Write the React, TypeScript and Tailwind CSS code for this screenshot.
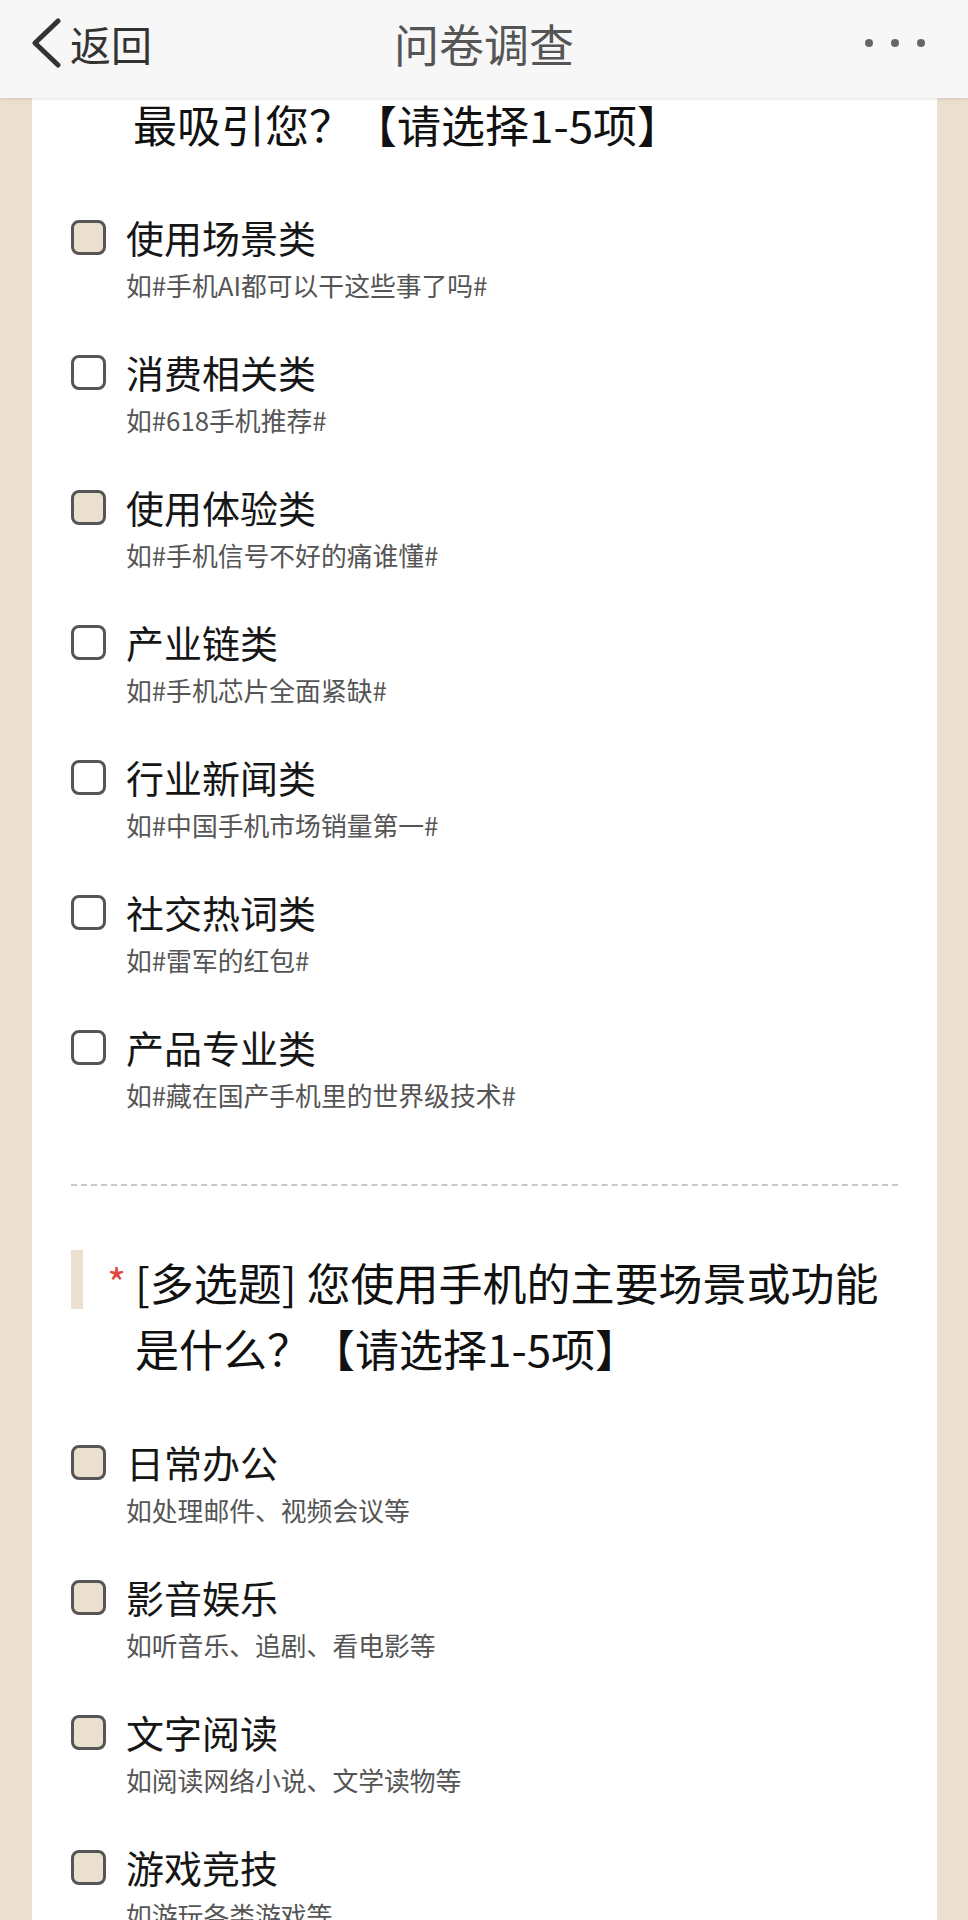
import React from 'react';

// options for the first question (its title is scrolled off the top)
const firstOptions = [
  { id: 'a1', label: '使用场景类', desc: '如#手机AI都可以干这些事了吗#', shaded: true },
  { id: 'a2', label: '消费相关类', desc: '如#618手机推荐#', shaded: false },
  { id: 'a3', label: '使用体验类', desc: '如#手机信号不好的痛谁懂#', shaded: true },
  { id: 'a4', label: '产业链类', desc: '如#手机芯片全面紧缺#', shaded: false },
  { id: 'a5', label: '行业新闻类', desc: '如#中国手机市场销量第一#', shaded: false },
  { id: 'a6', label: '社交热词类', desc: '如#雷军的红包#', shaded: false },
  { id: 'a7', label: '产品专业类', desc: '如#藏在国产手机里的世界级技术#', shaded: false },
];

const secondOptions = [
  { id: 'b1', label: '日常办公', desc: '如处理邮件、视频会议等', shaded: true },
  { id: 'b2', label: '影音娱乐', desc: '如听音乐、追剧、看电影等', shaded: true },
  { id: 'b3', label: '文字阅读', desc: '如阅读网络小说、文学读物等', shaded: true },
  { id: 'b4', label: '游戏竞技', desc: '如游玩各类游戏等', shaded: true },
];

type Option = { id: string; label: string; desc: string; shaded: boolean };

const OptionRow: React.FC<{ option: Option }> = ({ option }) => (
  <li className="flex flex-col mb-[39px]">
    <div className="flex items-center h-[48px]">
      <span
        className={`w-[35px] h-[35px] rounded-[8px] border-[3px] border-[#555555] ml-[39px] ${
          option.shaded ? 'bg-[#ebdfcf]' : 'bg-white'
        }`}
      />
      <span className="ml-[20px] text-[38px] leading-[48px] text-[#161616]">{option.label}</span>
    </div>
    <p className="pl-[94px] text-[25.8px] leading-[48px] text-[#555555]">{option.desc}</p>
  </li>
);

const App: React.FC = () => {
  return (
    <div
      className="w-[968px] h-[1920px] overflow-hidden bg-[#ebdfcf]"
      style={{ fontFamily: '"Noto Sans CJK SC", "Noto Sans", sans-serif' }}
    >
      {/* top bar */}
      <header className="relative z-10 h-[98px] bg-[#f7f7f7] shadow-[0_1px_3px_rgba(0,0,0,0.12)] grid grid-cols-[1fr_auto_1fr] items-center pb-[12px]">
        <div className="flex items-center pl-[30px]">
          <svg width="32" height="50" viewBox="0 0 32 50" fill="none">
            <path d="M28 3 L5 25 L28 47" stroke="#333333" strokeWidth="5" strokeLinecap="round" strokeLinejoin="round" />
          </svg>
          <span className="ml-[8px] text-[41px] leading-none text-[#333333]">返回</span>
        </div>
        <h1 className="text-[45px] leading-none text-[#555555]">问卷调查</h1>
        <div className="flex justify-end items-center gap-[18px] pr-[43px]">
          <span className="w-[8px] h-[8px] rounded-full bg-[#666666]" />
          <span className="w-[8px] h-[8px] rounded-full bg-[#666666]" />
          <span className="w-[8px] h-[8px] rounded-full bg-[#666666]" />
        </div>
      </header>

      <main className="pl-[32px] pr-[31px]">
        <div className="bg-white min-h-[1822px]">
          {/* tail of question 1 */}
          <p className="pl-[101px] text-[44px] leading-[52px] text-[#111111] mb-[63px]">
            最吸引您？【请选择1-5项】
          </p>
          <ul>
            {firstOptions.map((o) => (
              <OptionRow key={o.id} option={o} />
            ))}
          </ul>

          {/* li margin collapses into this one */}
          <div className="mx-[39px] mt-[65px] border-t-[2px] border-dashed border-[#c9c9c9]" />

          {/* question 2 */}
          <div className="flex items-start mt-[63px] mb-[57px]">
            <span className="ml-[39px] mt-[1px] w-[12px] h-[59px] bg-[#ebdfcf]" />
            <span className="w-[52px] pr-[9px] text-right text-[40px] leading-[66px] text-[#e0463f]">*</span>
            <p className="text-[44px] leading-[66px] text-[#111111]">
              [多选题] 您使用手机的主要场景或功能
              <br />
              是什么？【请选择1-5项】
            </p>
          </div>
          <ul>
            {secondOptions.map((o) => (
              <OptionRow key={o.id} option={o} />
            ))}
          </ul>
        </div>
      </main>
    </div>
  );
};

export default App;
